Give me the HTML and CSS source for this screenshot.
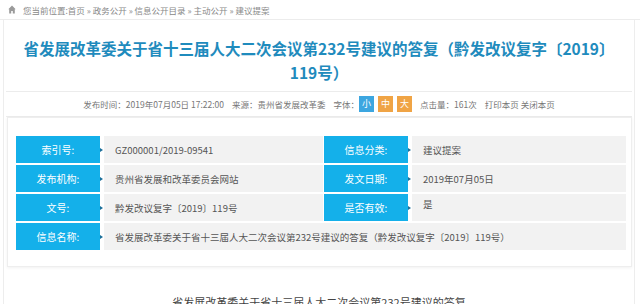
FILE: index.html
```html
<!DOCTYPE html>
<html lang="zh-CN">
<head>
    <meta charset="UTF-8">
    <meta name="viewport" content="width=device-width, initial-scale=1.0">
    <title>建议提案</title>
    <link rel="stylesheet" href="styles.css">
</head>
<body>
    <!-- 当前位置 -->
    <div class="crumb">
        <svg class="home" width="8" height="9" viewBox="0 0 8 9">
            <path d="M4 0.5 L0.3 4.2 L1.2 4.2 L1.2 8.5 L3.2 8.5 L3.2 6 L4.8 6 L4.8 8.5 L6.8 8.5 L6.8 4.2 L7.7 4.2 Z" fill="#9a9a9a"/>
        </svg>
        <span>您当前位置:首页 » 政务公开 » 信息公开目录 » 主动公开 » 建议提案</span>
    </div>

    <div class="page">
        <h1 class="title">省发展改革委关于省十三届人大二次会议第232号建议的答复（黔发改议复字〔2019〕119号）</h1>

        <div class="meta">
            <span>发布时间：2019年07月05日 17:22:00</span>
            <span>来源：贵州省发展改革委</span>
            <span class="fonts">字体：
                <b class="fs small">小</b><b class="fs mid">中</b><b class="fs mid">大</b>
            </span>
            <span>点击量：161次</span>
            <span>打印本页 关闭本页</span>
        </div>

        <!-- 信息表 -->
        <div class="card">
            <div class="info">
                <div class="cell"><div class="label">索引号:</div><div class="value">GZ000001/2019-09541</div></div>
                <div class="cell"><div class="label">信息分类:</div><div class="value">建议提案</div></div>
                <div class="cell"><div class="label">发布机构:</div><div class="value">贵州省发展和改革委员会网站</div></div>
                <div class="cell"><div class="label">发文日期:</div><div class="value">2019年07月05日</div></div>
                <div class="cell"><div class="label">文号:</div><div class="value">黔发改议复字〔2019〕119号</div></div>
                <div class="cell"><div class="label">是否有效:</div><div class="value top">是</div></div>
                <div class="cell wide"><div class="label">信息名称:</div><div class="value">省发展改革委关于省十三届人大二次会议第232号建议的答复（黔发改议复字〔2019〕119号）</div></div>
            </div>
        </div>

        <div class="body-title">省发展改革委关于省十三届人大二次会议第232号建议的答复</div>
    </div>
</body>
</html>
```

FILE: styles.css
```css
body {
    margin: 0;
    font-family: "Noto Sans CJK SC", "Noto Sans", sans-serif;
    color: #555;
    background: #fff;
}
.crumb {
    height: 19px;
    display: flex;
    align-items: center;
    padding-left: 8px;
    font-size: 8.5px;
    color: #888;
    border-bottom: 1px solid #ececec;
}
.home {
    margin-right: 7px;
}
.page {
    margin: 0 5px 0 3px;
    border-left: 1px solid #ededed;
    border-right: 1px solid #ededed;
    height: 284px;
}
.title {
    margin: 0;
    padding: 16px 8px 0;
    font-size: 15.5px;
    line-height: 24px;
    font-weight: bold;
    text-align: center;
    color: #1f8bbd;
}
.meta {
    margin: 7px 2px 0;
    height: 24px;
    border-top: 1px solid #ececec;
    border-bottom: 1px solid #ececec;
    display: flex;
    justify-content: center;
    align-items: center;
    gap: 8px;
    font-size: 8.5px;
    color: #777;
}
.fonts {
    display: flex;
    align-items: center;
}
.fs {
    width: 15px;
    height: 16px;
    line-height: 16px;
    text-align: center;
    color: #fff;
    font-weight: normal;
    font-size: 9px;
    margin-left: 4px;
}
.fs.small {
    background: #3ca6e0;
    margin-left: 0;
}
.fs.mid {
    background: #f0a445;
}
.card {
    margin: 0 2px 0 3px;
    padding: 18px 5px 16px 8px;
    border: 1px solid #eeeeee;
    box-shadow: 0 1px 3px rgba(0, 0, 0, 0.06);
}
.info {
    display: grid;
    grid-template-columns: 307px 1fr;
    column-gap: 1px;
    row-gap: 2px;
}
.cell {
    display: flex;
    height: 27px;
}
.cell.wide {
    grid-column: 1 / 3;
}
.label {
    position: relative;
    width: 84px;
    flex: none;
    background: #14b0ea;
    color: #fff;
    font-size: 10px;
    display: flex;
    align-items: center;
    justify-content: center;
    margin-right: 4px;
}
.label::after {
    content: "";
    position: absolute;
    right: -3px;
    top: 12px;
    border-left: 3px solid #1a6f9a;
    border-top: 2px solid transparent;
    border-bottom: 2px solid transparent;
}
.value {
    flex: 1;
    background: #f2f2f2;
    font-size: 9.5px;
    color: #555;
    padding-left: 11px;
    display: flex;
    align-items: center;
}
.value.top {
    align-items: flex-start;
    padding-top: 3px;
}
.body-title {
    margin-top: 27px;
    text-align: center;
    font-size: 11px;
    color: #444;
}
```
